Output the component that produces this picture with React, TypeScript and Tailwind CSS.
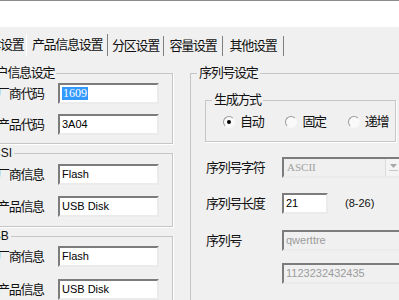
import React from 'react';

type InputProps = {
  value: string;
  className?: string;
  disabled?: boolean;
  serif?: boolean;
  highlight?: boolean;
};

function Input({ value, className = '', disabled = false, serif = false, highlight = false }: InputProps) {
  return (
    <div
      className={`h-[21px] border-2 border-t-[#7c7c7c] border-l-[#7c7c7c] border-r-[#ebebeb] border-b-[#ebebeb] flex items-center pl-[2px] overflow-hidden whitespace-nowrap tracking-normal ${
        disabled ? 'bg-[#f0f0f0] text-[#9c9c9c]' : 'bg-white text-black'
      } ${className}`}
    >
      <span
        className={`${serif ? "font-['Liberation_Serif',serif] text-[12px]" : 'text-[11px]'} leading-[13px] ${
          highlight ? 'bg-[#3399ff] text-white px-[1px]' : ''
        }`}
      >
        {value}
      </span>
    </div>
  );
}

function LeftRow({ label, value, serif, highlight, className = '' }: { label: string; value: string; serif?: boolean; highlight?: boolean; className?: string }) {
  return (
    <div className={`flex items-center ml-[15px] ${className}`}>
      <span className="w-[61px] leading-[14px] whitespace-nowrap">{label}</span>
      <Input className="w-[101px]" value={value} serif={serif} highlight={highlight} />
    </div>
  );
}

function Radio({ label, checked, className = '' }: { label: string; checked?: boolean; className?: string }) {
  return (
    <div className={`flex items-center ${className}`}>
      <span className="w-[12px] h-[12px] rounded-full border border-t-[#9a9a9a] border-l-[#9a9a9a] border-r-[#f8f8f8] border-b-[#f8f8f8] bg-[#fafafa] flex items-center justify-center">
        {checked && <span className="w-[4px] h-[4px] rounded-full bg-black" />}
      </span>
      <span className="ml-[5px] leading-[14px]">{label}</span>
    </div>
  );
}

export default function App() {
  return (
    <div className="w-[399px] h-[300px] overflow-hidden bg-[#f0f0f0] text-[13px] tracking-[-1.3px] text-[#111] font-['Liberation_Sans','Noto_Sans_CJK_SC',sans-serif]">
      {/* 上部の白い領域 */}
      <div className="h-[27px] bg-white border-t border-[#8c8c8c]" />

      {/* タブ */}
      <div className="h-[29px] pt-[6px] flex items-end whitespace-nowrap">
        <div className="-ml-[26px] w-[52px] h-[22px] flex items-center justify-center">基本设置</div>
        <div className="w-[82px] h-[22px] flex items-center justify-center border-l border-white border-r border-r-[#7f7f7f]">产品信息设置</div>
        <div className="w-[56px] h-[20px] flex items-center justify-center border-r border-[#7f7f7f]">分区设置</div>
        <div className="w-[59px] h-[20px] flex items-center justify-center border-r border-[#7f7f7f]">容量设置</div>
        <div className="w-[61px] h-[20px] flex items-center justify-center border-r border-[#7f7f7f]">其他设置</div>
      </div>

      <div className="flex items-start mt-[10px]">
        {/* 左カラム */}
        <div className="-ml-[25px] w-[198px] shrink-0 flex flex-col">
          <fieldset className="border border-[#c6c6c6] pl-[6px] pb-[8px] shadow-[1px_1px_0_#fff]">
            <legend className="px-[2px] leading-[14px] whitespace-nowrap">用户信息设定</legend>
            <LeftRow className="mt-[3px]" label="厂商代码" value="1609" serif highlight />
            <LeftRow className="mt-[10px]" label="产品代码" value="3A04" />
          </fieldset>

          <fieldset className="mt-[2px] border border-[#c6c6c6] pl-[6px] pb-[9px] shadow-[1px_1px_0_#fff]">
            <legend className="px-[2px] leading-[14px] whitespace-nowrap tracking-normal text-[12px]">SCSI</legend>
            <LeftRow className="mt-[4px]" label="厂商信息" value="Flash" />
            <LeftRow className="mt-[11px]" label="产品信息" value="USB Disk" />
          </fieldset>

          <fieldset className="mt-[2px] border border-[#c6c6c6] pl-[6px] pb-[9px] shadow-[1px_1px_0_#fff]">
            <legend className="px-[2px] leading-[14px] whitespace-nowrap tracking-normal text-[12px]">USB</legend>
            <LeftRow className="mt-[3px]" label="厂商信息" value="Flash" />
            <LeftRow className="mt-[12px]" label="产品信息" value="USB Disk" />
          </fieldset>
        </div>

        {/* 右カラム */}
        <fieldset className="ml-[17px] w-[240px] h-[260px] shrink-0 border border-[#c6c6c6] pl-[6px] shadow-[1px_1px_0_#fff]">
          <legend className="px-[2px] leading-[14px] whitespace-nowrap">序列号设定</legend>

          <fieldset className="mt-[13px] ml-[8px] w-[191px] border border-[#c6c6c6] pl-[6px] pb-[12px] shadow-[1px_1px_0_#fff]">
            <legend className="px-[2px] leading-[14px] whitespace-nowrap">生成方式</legend>
            <div className="mt-[8px] flex items-center whitespace-nowrap">
              <Radio className="ml-[11px]" label="自动" checked />
              <Radio className="ml-[22px]" label="固定" />
              <Radio className="ml-[22px]" label="递增" />
            </div>
          </fieldset>

          <div className="mt-[15px] ml-[9px] flex items-center">
            <span className="w-[76px] leading-[14px] whitespace-nowrap">序列号字符</span>
            <div className="w-[120px] h-[21px] border-2 border-t-[#7c7c7c] border-l-[#7c7c7c] border-r-[#ebebeb] border-b-[#ebebeb] bg-[#f0f0f0] flex items-center tracking-normal">
              <span className="flex-1 pl-[3px] text-[11px] leading-[13px] text-[#a0a0a0] font-['Liberation_Serif',serif]">ASCII</span>
              <span className="w-[15px] h-full flex flex-col items-center justify-center bg-[#f4f4f4] border-l border-[#dcdcdc]">
                <svg width="7" height="4" viewBox="0 0 7 4">
                  <path d="M0 0H7L3.5 4Z" fill="#a8a8a8" />
                </svg>
                <span className="mt-[2px] w-[9px] h-[1px] bg-[#c8c8c8]" />
              </span>
            </div>
          </div>

          <div className="mt-[15px] ml-[9px] flex items-center">
            <span className="w-[76px] leading-[14px] whitespace-nowrap">序列号长度</span>
            <Input className="w-[46px]" value="21" />
            <span className="ml-[17px] text-[11px] leading-[13px] tracking-normal">(8-26)</span>
          </div>

          <div className="mt-[16px] ml-[9px] flex items-center">
            <span className="w-[76px] leading-[14px] whitespace-nowrap">序列号</span>
            <Input className="w-[130px]" value="qwerttre" disabled />
          </div>

          <div className="mt-[12px] ml-[85px] flex items-center">
            <Input className="w-[130px]" value="1123232432435" disabled />
          </div>
        </fieldset>
      </div>
    </div>
  );
}
